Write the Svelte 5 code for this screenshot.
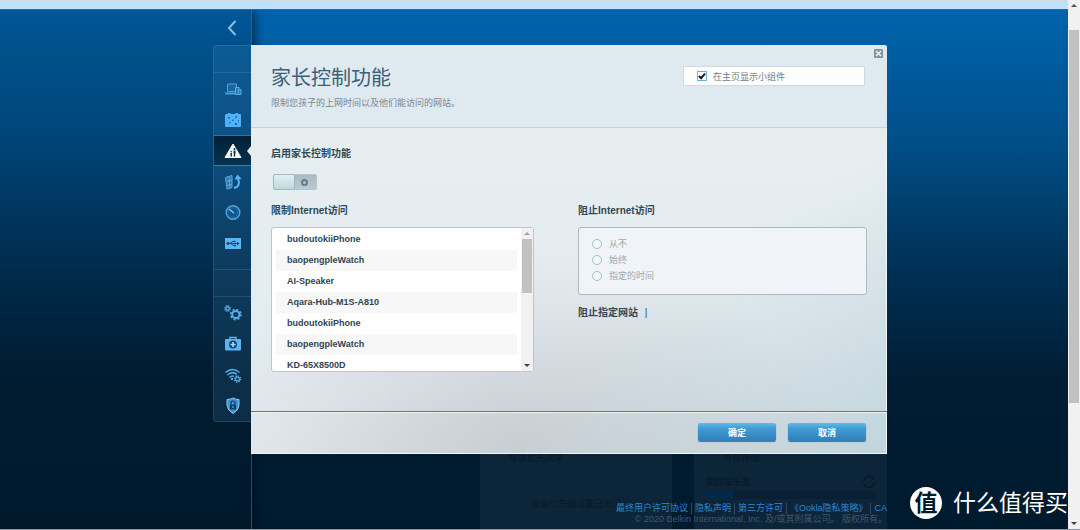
<script lang="ts">
  type NavItem = { id: string; label: string };

  const mainNav: NavItem[] = [
    { id: "devices", label: "设备列表" },
    { id: "guest", label: "访客访问" },
    { id: "parental", label: "家长控制功能" },
    { id: "media", label: "媒体优先次序" },
    { id: "speed", label: "速度测试" },
    { id: "usb", label: "外部存储" },
  ];
  const setupNav: NavItem[] = [
    { id: "gears", label: "连接" },
    { id: "kit", label: "故障排除" },
    { id: "wifi", label: "无线" },
    { id: "shield", label: "安全" },
  ];
  const devices = [
    "budoutokiiPhone",
    "baopengpleWatch",
    "AI-Speaker",
    "Aqara-Hub-M1S-A810",
    "budoutokiiPhone",
    "baopengpleWatch",
    "KD-65X8500D",
  ];
  const blockModes = ["从不", "始终", "指定的时间"];
  const legal = ["最终用户许可协议", "隐私声明", "第三方许可", "《Ookla隐私策略》", "CA"];

  let active = $state("parental");
  let enabled = $state(false);
  let showWidget = $state(true);
  let mode = $state("");
</script>

{#snippet gear(cx: number, cy: number, r: number, w: number)}
  {@const outer = r + w / 2 + 0.5}
  <circle {cx} {cy} {r} fill="none" stroke-width={w} />
  <circle {cx} {cy} r={outer} fill="none" stroke-width="1.6" stroke-dasharray="{outer * 0.3927} {outer * 0.3927}" />
{/snippet}

{#snippet icon(id: string)}
  <svg class="icon" viewBox="0 0 18 18" aria-hidden="true">
    {#if id === "devices"}
      <path d="M3.5 4h9v7.5h-9z" fill="#1d639e" stroke="#4d9fdc" />
      <path d="M0.5 12.5h11.5v2H2z" fill="#4d9fdc" />
      <path d="M11.5 7.5H15v7h-3.5z" fill="#2b77b5" stroke="#5aaae4" />
      <path d="M14.5 9.5H17v5h-2.5z" fill="#2b77b5" stroke="#5aaae4" />
    {:else if id === "guest"}
      <path d="M2 3h2V2h2.5v1h5V2H14v1h2q1 0 1 1v11q0 1-1 1H2q-1 0-1-1V4q0-1 1-1z" fill="#4fb2f8" />
      <path d="M4 6h2v1.500H4zM11.500 5H13v2h-1.500zM8 8.500h1.500V10H8zM5 11h1.500v1.500H5zM11 12h2v2h-2zM14 9h1v1.500h-1z" fill="#1c6cad" />
    {:else if id === "parental"}
      <path d="M9 2l8 13.500H1z" fill="#f5f8fa" stroke="#f5f8fa" stroke-linejoin="round" />
      <circle cx="10.5" cy="7" r="1" fill="#12304a" />
      <path d="M9.500 8.500h2v3h-.3v3H9.800v-3h-.3zM6.500 11H8v3.500H6.500z" fill="#12304a" />
      <circle cx="7.2" cy="9.8" r=".8" fill="#12304a" />
    {:else if id === "media"}
      <path d="M1.500 4.500 8 2.500v12l-5 1.500z" fill="#2c71a8" stroke="#5aa9df" />
      <path d="m2.500 8.500 5.500-1.500M2.800 12.500l5.200-1.500M5 4l.8 11" stroke="#6fb8e8" stroke-width=".8" />
      <path d="M10 15c5-1 6-5 4-9" fill="none" stroke="#5ab4f3" stroke-width="2" />
      <path d="M10.500 6.500l3-5 4 4.500z" fill="#5ab4f3" />
    {:else if id === "speed"}
      <circle cx="9" cy="8.500" r="6.800" fill="#12558d" stroke="#4da5e3" stroke-width="1.4" />
      <circle cx="9" cy="8.500" r="4.800" fill="none" stroke="#3b8cc9" stroke-dasharray="1 1.5" />
      <path d="M5 5l5 4" stroke="#8fd0f8" stroke-width="1.3" />
    {:else if id === "usb"}
      <path d="M1 3h16v11H1z" fill="#5cb5f2" />
      <path d="M3.500 8.500H14M6 8.500l2-2h2M7 8.500l2 2h2" fill="none" stroke="#13466f" />
      <circle cx="4" cy="8.500" r="1.400" fill="#13466f" />
      <path d="M13 6.800l2.500 1.700-2.500 1.700zM10 5.700h1.500v1.500H10zM10.500 9.800H12v1.500h-1.500z" fill="#13466f" />
    {:else if id === "gears"}
      <g stroke="#58aeea">
        {@render gear(3.5, 4.5, 1.6, 1.2)}
        {@render gear(11.8, 10.5, 3.6, 2)}
      </g>
    {:else if id === "kit"}
      <path d="M6 4V2.500h6V4" fill="none" stroke="#5cb5f2" stroke-width="1.4" />
      <path d="M2 4h14q1 0 1 1v9.500q0 1-1 1H2q-1 0-1-1V5q0-1 1-1z" fill="#5cb5f2" />
      <circle cx="9" cy="9.500" r="4" fill="#16466d" />
      <path d="M9 7v5M6.500 9.500h5" stroke="#a7dbfa" stroke-width="1.6" />
    {:else if id === "wifi"}
      <g fill="none" stroke="#5aabe4" stroke-width="1.5">
        <path d="M1.500 6.500q7-6 14 0" />
        <path d="M3.500 9q5-4.500 9.500-.5" />
        <path d="M5.500 11.500Q8 9 10 10.500" />
      </g>
      <circle cx="8" cy="13" r="1.2" fill="#5aabe4" />
      <g stroke="#58aeea">{@render gear(13.5, 13, 1.9, 1.2)}</g>
    {:else}
      <path d="M3 2.500q3.500 0 6-1.500 2.500 1.500 6 1.500V8q0 5-6 8.500Q3 13 3 8z" fill="#3f93d0" stroke="#8accf3" />
      <path d="M7 7.500V6q0-2 2-2t2 2v1.500" fill="none" stroke="#123a5c" stroke-width="1.2" />
      <path d="M6 7.500h6v5H6z" fill="#123a5c" />
      <path d="M9 9v2" stroke="#7cc3ef" />
    {/if}
  </svg>
{/snippet}

{#snippet navButton(item: NavItem)}
  <button class="nav-item" class:active={active === item.id} aria-label={item.label} onclick={() => (active = item.id)}>
    {@render icon(item.id)}
  </button>
{/snippet}

{#snippet scrollbar(top: number, height: number, atTop: boolean)}
  <div class="scroll">
    <i class="up" class:faded={atTop}></i>
    <div class="track"><div class="thumb" style="top: {top}%; height: {height}%"></div></div>
    <i class="down"></i>
  </div>
{/snippet}

<div class="window">
  <div class="viewport">
    <div class="topbar"></div>
    <div class="stage">
      <div class="rail-space"></div>

      <div class="rail">
        <button class="back" aria-label="返回">
          <svg viewBox="0 0 10 16" aria-hidden="true"><path d="M8.500 1 2 8l6.500 7" fill="none" stroke="#86bde3" stroke-width="2" /></svg>
        </button>
        <nav>
          <div class="spacer"></div>
          <div class="group">
            {#each mainNav as item}{@render navButton(item)}{/each}
          </div>
          <div class="spacer"></div>
          <div class="group last">
            {#each setupNav as item}{@render navButton(item)}{/each}
          </div>
        </nav>
      </div>

      <main>
        <section class="dialog">
          <button class="close" aria-label="关闭">
            <svg viewBox="0 0 9 9" aria-hidden="true"><path d="m2 2 5 5m0-5-5 5" stroke="#f2f6f8" stroke-width="1.5" /></svg>
          </button>
          <header>
            <div>
              <h1>家长控制功能</h1>
              <p>限制您孩子的上网时间以及他们能访问的网站。</p>
            </div>
            <label class="widget">
              <input type="checkbox" bind:checked={showWidget} />
              在主页显示小组件
            </label>
          </header>

          <div class="body">
            <h2><label for="enable">启用家长控制功能</label></h2>
            <input id="enable" class="switch" type="checkbox" role="switch" bind:checked={enabled} />

            <div class="columns">
              <div>
                <h2>限制Internet访问</h2>
                <div class="list">
                  <ul>
                    {#each devices as device}<li>{device}</li>{/each}
                  </ul>
                  {@render scrollbar(0, 45, true)}
                </div>
              </div>
              <div>
                <h2>阻止Internet访问</h2>
                <div class="modes">
                  {#each blockModes as name}
                    <label><input type="radio" name="mode" value={name} bind:group={mode} />{name}</label>
                  {/each}
                </div>
                <h2 class="sites">阻止指定网站 <span>|</span></h2>
              </div>
            </div>
          </div>

          <footer>
            <button class="primary">确定</button>
            <button class="primary">取消</button>
          </footer>
        </section>

        <div class="behind">
          <div class="card">
            <div class="card-title">媒体优先次序</div>
            <p class="card-note">设备优先级设置已关闭</p>
          </div>
          <div class="card">
            <div class="card-title">外部存储</div>
            <div class="drive">
              <span>家庭娱乐室</span>
              <svg viewBox="0 0 14 14" aria-hidden="true"><circle cx="7" cy="7" r="5.500" fill="none" stroke="#08192a" stroke-width="1.5" stroke-dasharray="14 3" /></svg>
            </div>
            <div class="meter"><div style="width: 16%"></div></div>
          </div>
        </div>

        <div class="legal">
          <div class="links">
            {#each legal as name}<a href="#legal">{name}</a>{/each}
          </div>
          <p>© 2020 Belkin International, Inc. 及/或其附属公司。 版权所有。</p>
        </div>
      </main>
    </div>

    <div class="brand">
      <span class="seal">值</span>
      <span>什么值得买</span>
    </div>
  </div>

  {@render scrollbar(3.7, 73.6, false)}
</div>

<style>
  :global(body) {
    font-family: "Liberation Sans", "Noto Sans CJK SC", sans-serif;
    font-size: 9px;
    color: #2f4552;
  }

  h1,
  h2,
  p,
  ul {
    margin: 0;
    padding: 0;
    font-weight: normal;
  }

  button {
    font: inherit;
    border: none;
    padding: 0;
    background: none;
    cursor: pointer;
  }

  .window {
    display: flex;
    min-height: 100vh;
    box-sizing: border-box;
    border-bottom: 1px solid #8a97a3;
  }

  .viewport {
    position: relative;
    flex: 1;
    min-width: 0;
    display: flex;
    flex-direction: column;
    overflow: hidden;
    background: linear-gradient(#0065b0, #00508b 25%, #003156 50%, #001d34 72%, #001a2d);
  }

  .topbar {
    height: 8px;
    border-top: 1px solid #d2dce3;
    background: #bce2ff;
    flex-shrink: 0;
  }

  .stage {
    flex: 1;
    display: grid;
    grid-template-columns: 213fr 38px 636fr 181fr;
    border-top: 1px solid #2c6ba0;
  }

  .rail-space,
  .rail {
    background: rgba(0, 16, 32, 0.16);
  }

  .rail {
    box-shadow: 1px 0 0 rgba(95, 145, 185, 0.45), 2px 0 12px rgba(0, 10, 25, 0.8);
    clip-path: inset(0 -14px 0 0);
  }

  .back {
    display: grid;
    place-items: center;
    width: 100%;
    height: 35px;
  }

  .back svg {
    width: 10px;
    height: 16px;
  }

  nav {
    border: 1px solid rgba(120, 170, 210, 0.18);
    border-right: none;
    border-radius: 4px 0 0 4px;
    background: rgba(80, 145, 190, 0.17);
  }

  .spacer {
    height: 26px;
  }

  .group {
    padding-bottom: 10px;
    border-top: 1px solid rgba(120, 170, 210, 0.2);
    border-bottom: 1px solid rgba(120, 170, 210, 0.2);
  }

  .group.last {
    padding-bottom: 0;
    border-bottom: none;
  }

  .nav-item {
    position: relative;
    display: grid;
    place-items: center;
    width: 100%;
    height: 31px;
    box-sizing: border-box;
  }

  .nav-item.active {
    background: linear-gradient(#011f36, #063354);
    border-top: 1px solid #377197;
    border-bottom: 1px solid #46799e;
  }

  .nav-item.active::after {
    content: "";
    position: absolute;
    right: 0;
    border: 5px solid transparent;
    border-left: none;
    border-right: 4px solid #e8f0f3;
  }

  .icon {
    width: 18px;
    height: 18px;
  }

  main {
    position: relative;
    display: flex;
    flex-direction: column;
    min-width: 0;
    padding-top: 35px;
  }

  .dialog {
    position: relative;
    border-radius: 0 3px 0 0;
    overflow: hidden;
    background:
      radial-gradient(ellipse 50% 48% at 42% 98%, rgba(190, 194, 198, 0.6), transparent),
      linear-gradient(155deg, transparent 58%, rgba(165, 195, 203, 0.55)),
      linear-gradient(#e7eeef, #e5edf0 45%, #e3eaf0);
    box-shadow: inset -1px -1px 0 #f1f6f8;
  }

  .close {
    position: absolute;
    top: 4px;
    right: 4px;
    width: 9px;
    height: 9px;
    display: grid;
    background: #81939f;
    border-radius: 1px;
  }

  header {
    display: flex;
    justify-content: space-between;
    align-items: flex-start;
    padding: 21px 22px 17px 20px;
    background: #dfe9f0;
    border-bottom: 1px solid #c5d2da;
  }

  h1 {
    font-size: 20px;
    line-height: 24px;
    color: #3b5f78;
  }

  header p {
    margin-top: 6px;
    line-height: 14px;
    color: #7b878f;
  }

  .widget {
    display: flex;
    align-items: center;
    gap: 6px;
    width: 182px;
    height: 20px;
    box-sizing: border-box;
    padding-left: 13px;
    background: #fdfdfc;
    border: 1px solid #cfdae1;
    color: #71808a;
  }

  input {
    appearance: none;
    margin: 0;
    box-sizing: border-box;
    background: #fff;
  }

  .widget input {
    position: relative;
    width: 10px;
    height: 10px;
    border: 1px solid #6fb1d3;
  }

  .widget input:checked::after {
    content: "";
    position: absolute;
    left: 2px;
    top: 0;
    width: 2px;
    height: 5px;
    border: solid #12202b;
    border-width: 0 2px 2px 0;
    transform: rotate(42deg);
  }

  .body {
    padding: 19px 20px 39px;
    border-bottom: 1px solid #5f7884;
    box-shadow: 0 1px 0 #eef3f5;
  }

  h2 {
    font-size: 10px;
    line-height: 14px;
    font-weight: bold;
    color: #314956;
  }

  .switch {
    position: relative;
    display: block;
    width: 44px;
    height: 16px;
    margin: 13px 0 14px 2px;
    background: linear-gradient(#a9bac3, #bccad1);
    border: 1px solid #b6c6cd;
    border-radius: 2px;
  }

  .switch::before {
    content: "";
    position: absolute;
    inset: -1px auto -1px -1px;
    width: 20px;
    border: 1px solid #9fb9c0;
    border-radius: 2px;
    background: linear-gradient(#e1f1f4, #bed8dc);
  }

  .switch::after {
    content: "";
    position: absolute;
    top: 4px;
    right: 8px;
    width: 3px;
    height: 3px;
    border: 2px solid #657d89;
    border-radius: 50%;
  }

  .switch:checked::before {
    inset: -1px -1px -1px auto;
  }

  .columns {
    display: grid;
    grid-template-columns: 263fr 289fr;
    gap: 44px;
  }

  .list {
    display: flex;
    height: 145px;
    margin-top: 9px;
    box-sizing: border-box;
    overflow: hidden;
    background: #fff;
    border: 1px solid #b5c9d1;
    border-radius: 3px;
  }

  ul {
    flex: 1;
    list-style: none;
    padding: 1px 4px;
  }

  li {
    height: 21px;
    line-height: 21px;
    padding-left: 11px;
    font-weight: bold;
  }

  li:nth-child(even) {
    background: #f7f7f7;
  }

  .scroll {
    display: flex;
    flex-direction: column;
    align-items: center;
    width: 12px;
    background: #f1f1f1;
  }

  .track {
    position: relative;
    flex: 1;
    width: 10px;
  }

  .thumb {
    position: absolute;
    left: 0;
    right: 0;
    background: #c1c1c1;
  }

  .scroll i {
    margin: 4px 0;
    border: 3px solid transparent;
  }

  .scroll .up {
    border-top: none;
    border-bottom-color: #505050;
  }

  .scroll .faded {
    border-bottom-color: #a3a3a3;
  }

  .scroll .down {
    border-bottom: none;
    border-top-color: #404040;
  }

  .modes {
    display: flex;
    flex-direction: column;
    gap: 2px;
    height: 68px;
    margin: 9px 0 11px;
    padding: 9px 13px;
    box-sizing: border-box;
    background: #f0f4f8;
    border: 1px solid #abb9c1;
    border-radius: 3px;
  }

  .modes label {
    display: flex;
    align-items: center;
    gap: 7px;
    line-height: 14px;
    color: #9da7ad;
  }

  .modes input {
    width: 10px;
    height: 10px;
    border: 1px solid #9fbdcc;
    border-radius: 50%;
    background: #f7fafc;
  }

  .modes input:checked {
    background: #4c8fb5;
  }

  .sites span {
    margin-left: 4px;
    font-weight: normal;
  }

  footer {
    display: flex;
    justify-content: flex-end;
    gap: 12px;
    padding: 11px 21px 13px;
  }

  .primary {
    width: 78px;
    height: 18px;
    color: #fff;
    font-weight: bold;
    background: linear-gradient(#5cbdec, #429bd5 30%, #317fb7);
    border-radius: 2px;
    box-shadow: 0 1px 1px #54707f;
  }

  .behind {
    flex: 1;
    display: grid;
    grid-template-columns: 193fr 193fr;
    gap: 22px;
    margin-left: 36%;
    color: #08192a;
  }

  .card {
    padding: 0 11px;
    background: #0d2538;
  }

  .card-title {
    height: 19px;
    line-height: 8px;
    padding-left: 18px;
  }

  .card-note {
    margin-top: 24px;
    text-align: center;
  }

  .drive {
    display: flex;
    justify-content: space-between;
    align-items: center;
    line-height: 18px;
  }

  .drive svg {
    width: 14px;
    height: 14px;
  }

  .meter {
    height: 8px;
    background: #091f33;
  }

  .meter div {
    height: 100%;
    background: #03294a;
  }

  .legal {
    position: absolute;
    right: 0;
    bottom: 4px;
    text-align: right;
    line-height: 11px;
    white-space: nowrap;
    color: #42566a;
  }

  .links {
    display: flex;
    justify-content: flex-end;
  }

  .links a {
    color: #2f87cf;
    text-decoration: none;
  }

  .links a + a {
    margin-left: 3px;
    padding-left: 3px;
    border-left: 1px solid #34495c;
  }

  .brand {
    position: absolute;
    right: 0;
    bottom: 10px;
    display: flex;
    align-items: center;
    gap: 11px;
    color: #fff;
    font-size: 23px;
    line-height: 32px;
    white-space: nowrap;
  }

  .seal {
    width: 32px;
    height: 32px;
    border-radius: 50%;
    background: #fff;
    color: #001a2d;
    text-align: center;
    font-weight: bold;
  }
</style>
